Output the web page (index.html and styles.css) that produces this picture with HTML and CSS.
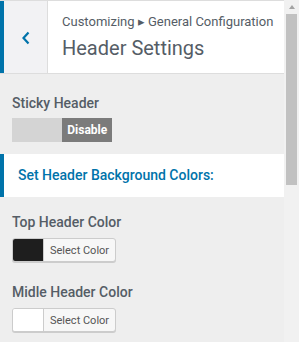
FILE: index.html
```html
<!DOCTYPE html>
<html>
<head>
<meta charset="utf-8">
<link rel="stylesheet" href="styles.css">
</head>
<body>
<div class="app">
  <div class="panel">
    <header class="head">
      <a class="back" href="#">
        <svg width="10" height="14" viewBox="0 0 10 14"><path d="M7.5 1.5 L2.5 7 L7.5 12.5" fill="none" stroke="#0073aa" stroke-width="2.2"/></svg>
      </a>
      <div class="titles">
        <span class="crumb">Customizing ▸ General Configuration</span>
        <h1 class="title">Header Settings</h1>
      </div>
    </header>
    <div class="content">
      <div class="field field-first">
        <div class="label">Sticky Header</div>
        <div class="toggle"><span class="toggle-off"></span><span class="toggle-on">Disable</span></div>
      </div>
      <div class="section">Set Header Background Colors:</div>
      <div class="field field-color">
        <div class="label">Top Header Color</div>
        <div class="color-btn"><span class="swatch swatch-dark"></span><span class="color-text">Select Color</span></div>
      </div>
      <div class="field field-color2">
        <div class="label">Midle Header Color</div>
        <div class="color-btn"><span class="swatch swatch-light"></span><span class="color-text">Select Color</span></div>
      </div>
    </div>
  </div>
  <div class="scrollbar">
    <span class="arrow"></span>
    <span class="thumb"></span>
  </div>
</div>
</body>
</html>
```

FILE: styles.css
```css
html, body {
  margin: 0;
  padding: 0;
  background: #eeeeee;
  font-family: Roboto, "Liberation Sans", sans-serif;
}
.app {
  display: flex;
  height: 342px;
  overflow: hidden;
}
.panel {
  flex: 1;
  display: flex;
  flex-direction: column;
  background: #eeeeee;
}
.head {
  display: flex;
  height: 72px;
  background: #fff;
  border-top: 1px solid #dddddd;
  border-bottom: 1px solid #dddddd;
}
.back {
  width: 43px;
  border-left: 4px solid #0073aa;
  border-right: 1px solid #dddddd;
  background: #f2f2f4;
  display: flex;
  align-items: center;
  justify-content: center;
  padding-top: 2px;
  box-sizing: content-box;
  text-decoration: none;
}
.titles {
  display: flex;
  flex-direction: column;
  padding-left: 14px;
  padding-top: 13px;
}
.crumb {
  font-size: 13px;
  line-height: 16px;
  color: #555d66;
}
.title {
  margin: 6px 0 0;
  font-size: 20px;
  line-height: 24px;
  font-weight: 400;
  color: #555d66;
}
.content {
  display: flex;
  flex-direction: column;
}
.field {
  padding-left: 12px;
}
.field-first {
  padding-top: 20px;
}
.field-color {
  padding-top: 16px;
}
.field-color2 {
  padding-top: 21px;
}
.label {
  font-size: 14px;
  line-height: 18px;
  font-weight: 500;
  color: #555d66;
  margin-bottom: 7px;
}
.field-first .label {
  margin-bottom: 6px;
}
.toggle {
  display: flex;
  width: 100px;
  height: 24px;
}
.toggle-off {
  width: 50px;
  background: #d4d4d4;
}
.toggle-on {
  width: 50px;
  background: #7b7b7b;
  color: #fff;
  font-size: 12px;
  font-weight: 700;
  display: flex;
  align-items: center;
  justify-content: center;
  padding-left: 1px;
}
.section {
  margin-top: 12px;
  background: #fff;
  border-left: 4px solid #0073aa;
  padding: 12px 0 13px 14px;
  font-size: 14px;
  line-height: 18px;
  font-weight: 500;
  color: #0073aa;
}
.color-btn {
  display: flex;
  align-items: stretch;
  width: 102px;
  height: 22px;
  border: 1px solid #cccccc;
  border-radius: 3px;
  background: #f7f7f7;
  box-shadow: 0 1px 0 #cccccc;
  overflow: hidden;
}
.swatch {
  width: 30px;
  border-right: 1px solid #cccccc;
}
.swatch-dark {
  background: #1e1e1e;
}
.swatch-light {
  background: #ffffff;
}
.color-text {
  display: flex;
  align-items: center;
  padding-left: 6px;
  font-size: 11px;
  color: #555555;
}
.scrollbar {
  width: 15px;
  background: #f1f1f1;
  display: flex;
  flex-direction: column;
  align-items: center;
}
.arrow {
  margin-top: 5px;
  width: 0;
  height: 0;
  border-left: 3.5px solid transparent;
  border-right: 3.5px solid transparent;
  border-bottom: 4px solid #a3a3a3;
}
.thumb {
  margin-top: 5px;
  width: 11px;
  height: 171px;
  background: #c1c1c1;
}
```
